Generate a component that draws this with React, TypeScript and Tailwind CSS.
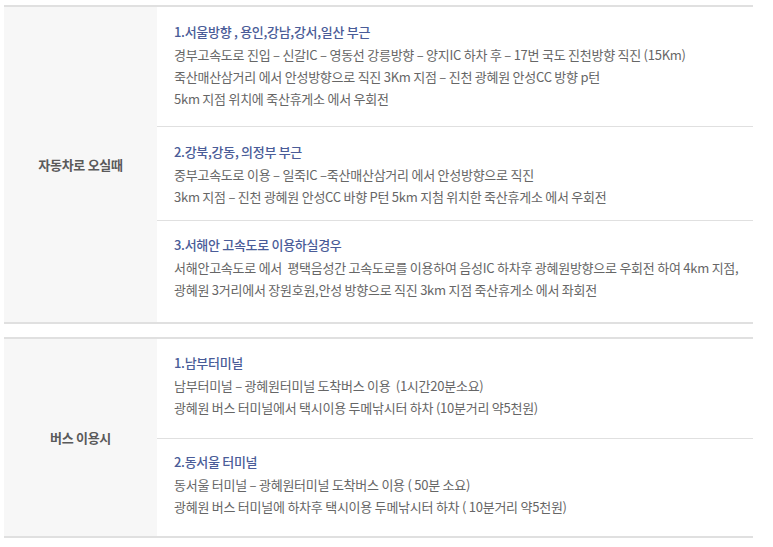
import React from "react";

type Route = {
  title: string;
  lines: string[];
  pad: string;
};

const carRoutes: Route[] = [
  {
    title: "1.서울방향 , 용인,강남,강서,일산 부근",
    lines: [
      "경부고속도로 진입 – 신갈IC – 영동선 강릉방향 – 양지IC 하차 후 – 17번 국도 진천방향 직진 (15Km)",
      "죽산매산삼거리 에서 안성방향으로 직진 3Km 지점 – 진천 광혜원 안성CC 방향 p턴",
      "5km 지점 위치에 죽산휴게소 에서 우회전",
    ],
    pad: "pt-[14px] pb-[16px]",
  },
  {
    title: "2.강북,강동, 의정부 부근",
    lines: [
      "중부고속도로 이용 – 일죽IC –죽산매산삼거리 에서 안성방향으로 직진",
      "3km 지점 – 진천 광혜원 안성CC 바향 P턴 5km 지첨 위치한 죽산휴게소 에서 우회전",
    ],
    pad: "pt-[14px] pb-[12px]",
  },
  {
    title: "3.서해안 고속도로 이용하실경우",
    lines: [
      "서해안고속도로 에서  평택음성간 고속도로를 이용하여 음성IC 하차후 광혜원방향으로 우회전 하여 4km 지점,",
      "광혜원 3거리에서 장원호원,안성 방향으로 직진 3km 지점 죽산휴게소 에서 좌회전",
    ],
    pad: "pt-[13px] pb-[21px]",
  },
];

const busRoutes: Route[] = [
  {
    title: "1.남부터미널",
    lines: [
      "남부터미널 – 광혜원터미널 도착버스 이용  (1시간20분소요)",
      "광혜원 버스 터미널에서 택시이용 두메낚시터 하차 (10분거리 약5천원)",
    ],
    pad: "pt-[13px] pb-[19px]",
  },
  {
    title: "2.동서울 터미널",
    lines: [
      "동서울 터미널 – 광혜원터미널 도착버스 이용 ( 50분 소요)",
      "광혜원 버스 터미널에 하차후 택시이용 두메낚시터 하차 ( 10분거리 약5천원)",
    ],
    pad: "pt-[12px] pb-[18px]",
  },
];

const Section = ({ label, routes }: { label: string; routes: Route[] }) => {
  return (
    <div className="flex border-t-2 border-b-2 border-[#e0e0e0]">
      {/* left label cell */}
      <div className="w-[153px] shrink-0 bg-[#f7f7f7] flex items-center justify-center">
        <span className="text-[13px] font-bold text-[#5a5a5a] tracking-[-0.3px]">{label}</span>
      </div>
      <div className="flex-1 divide-y divide-[#e0e0e0]">
        {routes.map((route, index) => {
          return (
            <div key={index} className={`pl-[17px] ${route.pad}`}>
              <p className="text-[13px] leading-[22px] font-medium text-[#4a5c98] tracking-[-0.3px] mb-[1px]">
                {route.title}
              </p>
              {route.lines.map((line, i) => (
                <p
                  key={i}
                  className="text-[13px] leading-[22px] text-[#666] tracking-[-0.25px] whitespace-pre"
                >
                  {line}
                </p>
              ))}
            </div>
          );
        })}
      </div>
    </div>
  );
};

export default function App() {
  return (
    <main
      className="w-[773px] h-[547px] bg-white pt-[5px] pl-[4px]"
      style={{ fontFamily: '"Noto Sans CJK KR", "Noto Sans", sans-serif' }}
    >
      <div className="w-[749px] flex flex-col gap-[13px]">
        <Section label="자동차로 오실때" routes={carRoutes} />
        <Section label="버스 이용시" routes={busRoutes} />
      </div>
    </main>
  );
}
